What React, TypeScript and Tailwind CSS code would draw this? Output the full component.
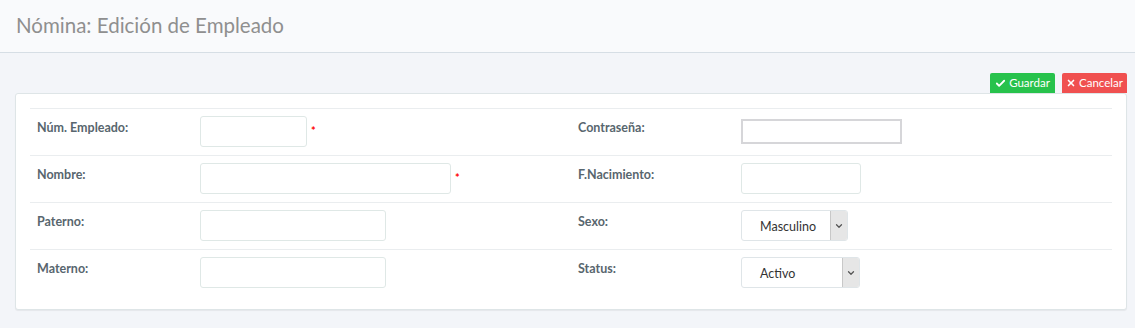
import { Check, X, ChevronDown } from 'lucide-react';

type Field = {
  label: string;
  kind: 'text' | 'native' | 'select';
  width: string;
  required?: boolean;
  value?: string;
};

const rows: [Field, Field][] = [
  [
    { label: 'Núm. Empleado:', kind: 'text', width: 'w-[107px]', required: true },
    { label: 'Contraseña:', kind: 'native', width: 'w-[161px]' },
  ],
  [
    { label: 'Nombre:', kind: 'text', width: 'w-[251px]', required: true },
    { label: 'F.Nacimiento:', kind: 'text', width: 'w-[120px]' },
  ],
  [
    { label: 'Paterno:', kind: 'text', width: 'w-[186px]' },
    { label: 'Sexo:', kind: 'select', width: 'w-[107px]', value: 'Masculino' },
  ],
  [
    { label: 'Materno:', kind: 'text', width: 'w-[186px]' },
    { label: 'Status:', kind: 'select', width: 'w-[119px]', value: 'Activo' },
  ],
];

function Control({ field }: { field: Field }) {
  if (field.kind === 'native') {
    return (
      <div className="pt-[3px]">
        <div className={`${field.width} h-[25px] border-2 border-[#d6d6d9] bg-white`} />
      </div>
    );
  }
  if (field.kind === 'select') {
    return (
      <div className={`${field.width} h-[31px] flex border border-[#dfe5e8] rounded-[3px] bg-white overflow-hidden`}>
        <span className="flex-1 pl-[18px] pt-[7px] text-[12.5px] text-[#333]">{field.value}</span>
        <span className="w-[17px] flex items-center justify-center bg-[#e6e6e6] border-l border-[#c8c8c8]">
          <ChevronDown className="w-[10px] h-[10px] text-[#555]" strokeWidth={3} />
        </span>
      </div>
    );
  }
  return (
    <div className="flex items-center gap-[4px]">
      <div className={`${field.width} h-[31px] border border-[#dfe8e6] rounded-[3px] bg-white`} />
      {field.required && <span className="text-[#ff0000] text-[11px] font-bold">*</span>}
    </div>
  );
}

function Cell({ field }: { field: Field }) {
  return (
    <div className="grid grid-cols-[162px_1fr] pl-[7px] pr-[7px] pt-[7px]">
      <label className="pt-[3px] text-[12.5px] font-bold text-[#58666e]">{field.label}</label>
      <div className="pl-[1px]">
        <Control field={field} />
      </div>
    </div>
  );
}

export default function App() {
  return (
    <div className="min-h-[328px] bg-[#f3f5f9] font-['Lato',sans-serif]">
      <div className="h-[53px] bg-[#f9fafc] border-b border-[#d6dee5] flex items-center px-[16px]">
        <h1 className="text-[20.5px] text-[#8f8f8f] leading-none pb-[2px]">Nómina: Edición de Empleado</h1>
      </div>
      <div className="px-[8px] pt-[20px]">
        <div className="flex justify-end gap-[7px] h-[20px]">
          <button className="w-[65px] h-[20px] flex items-center justify-center gap-[3px] rounded-t-[2px] bg-[#27c24c] text-white text-[11.5px]">
            <Check className="w-[11px] h-[11px]" strokeWidth={4} />
            Guardar
          </button>
          <button className="w-[65px] h-[20px] flex items-center justify-center gap-[3px] rounded-t-[2px] bg-[#f05050] text-white text-[11.5px]">
            <X className="w-[10px] h-[10px]" strokeWidth={4} />
            Cancelar
          </button>
        </div>
        <div className="ml-[7px] bg-white border border-[#dee5e7] rounded-[3px] shadow-[0_1px_1px_rgba(0,0,0,0.06)] px-[14px] pt-[14px] pb-[13px]">
          {rows.map((pair, i) => (
            <div key={i} className="grid grid-cols-2 h-[47px] border-t border-[#eaedef]">
              <Cell field={pair[0]} />
              <Cell field={pair[1]} />
            </div>
          ))}
        </div>
      </div>
    </div>
  );
}
